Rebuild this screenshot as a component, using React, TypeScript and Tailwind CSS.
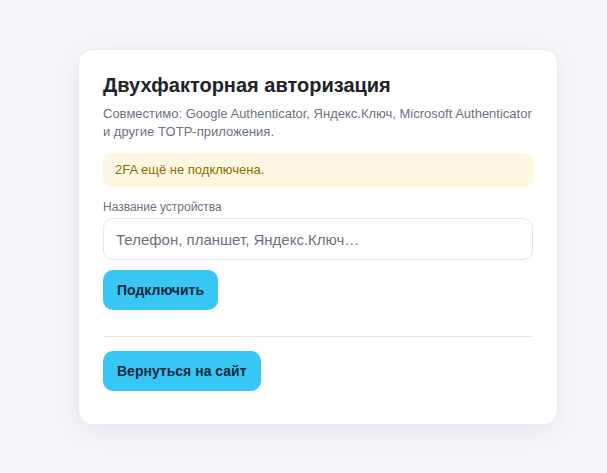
import React, { useState } from 'react';

const App: React.FC = () => {
  const [deviceName, setDeviceName] = useState('');

  return (
    <div
      className="min-h-screen bg-[#f4f6fa] pt-[49px] pl-[78px]"
      style={{ fontFamily: '"Liberation Sans", Arial, sans-serif' }}
    >
      <div className="w-[480px] bg-white rounded-[14px] border border-[#e8ebf0] shadow-[0_6px_24px_rgba(15,23,42,0.06)] px-6 pt-[21px] pb-[33px]">
        <h1 className="text-[20px] font-bold text-[#1f2328] leading-[28px]">
          Двухфакторная авторизация
        </h1>
        <p className="mt-[6px] text-[13px] leading-[18px] text-[#6b7280]">
          Совместимо: Google Authenticator, Яндекс.Ключ, Microsoft Authenticator и другие TOTP-приложения.
        </p>

        <div className="mt-[12px] h-[34px] flex items-center px-3 rounded-lg bg-[#fef8e3] text-[13px] text-[#8a6d00]">
          2FA ещё не подключена.
        </div>

        <form
          onSubmit={(e) => e.preventDefault()}
          className="mt-[12px] flex flex-col"
        >
          <label className="text-[12px] leading-[16px] text-[#6b7280]">
            Название устройства
          </label>
          <input
            value={deviceName}
            onChange={(e) => setDeviceName(e.target.value)}
            placeholder="Телефон, планшет, Яндекс.Ключ…"
            className="mt-[3px] h-[42px] w-full px-3 rounded-[10px] border border-[#e5e7eb] text-[15px] text-[#1f2328] placeholder:text-[#6b7280] outline-none"
          />
          <button
            type="submit"
            className="mt-[10px] self-start h-10 px-[14px] rounded-[10px] bg-[#38c6f5] text-[14px] font-bold text-[#0c2a3a]"
          >
            Подключить
          </button>
        </form>

        <div className="mt-[26px] border-t border-[#e5e7eb]" />

        <button
          type="button"
          className="mt-[14px] h-10 px-[14px] rounded-[10px] bg-[#38c6f5] text-[14px] font-bold text-[#0c2a3a]"
        >
          Вернуться на сайт
        </button>
      </div>
    </div>
  );
};

export default App;
